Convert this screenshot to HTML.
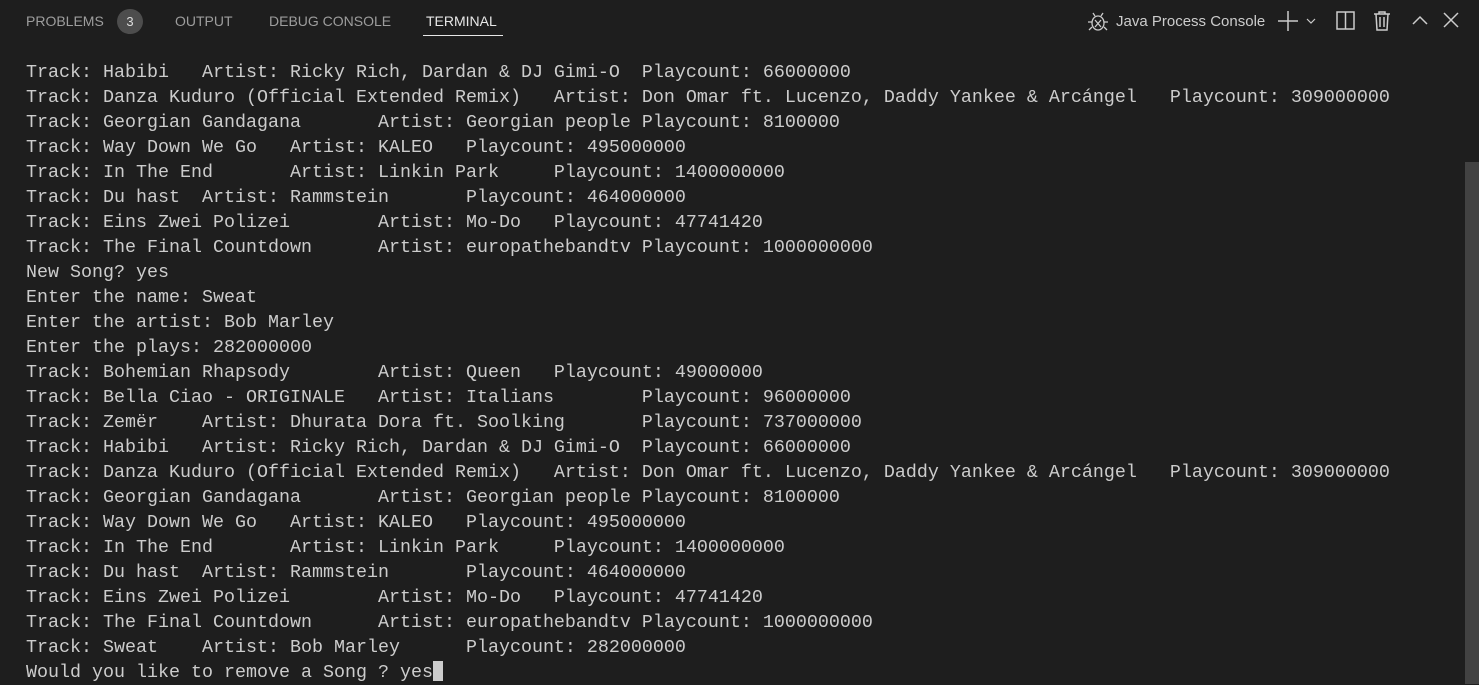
<!DOCTYPE html>
<html><head><meta charset="utf-8"><style>
body{margin:0;width:1479px;height:684px;background:#1e1e1e;overflow:hidden;position:relative;font-family:"Liberation Sans",sans-serif}
.tab{position:absolute;top:13px;font-size:14px;color:#9d9d9d;letter-spacing:0px}
.badge{position:absolute;left:117px;top:9px;width:26px;height:25px;border-radius:13px;background:#4d4d4d;color:#ddd;font-size:13px;text-align:center;line-height:25px}
pre{position:absolute;left:26px;top:60px;margin:0;font-family:"Liberation Mono",monospace;font-size:18.33px;line-height:25px;color:#cccccc}
.cur{display:inline-block;width:10px;height:20px;background:#ccc;vertical-align:-4px}
.sb{position:absolute;left:1465px;top:162px;width:14px;height:522px;background:#424242}
svg{position:absolute}
</style></head><body>
<div class="tab" style="left:26px">PROBLEMS</div>
<div class="badge">3</div>
<div class="tab" style="left:175px">OUTPUT</div>
<div class="tab" style="left:269px">DEBUG CONSOLE</div>
<div class="tab" style="left:426px;color:#e7e7e7">TERMINAL</div>
<div style="position:absolute;left:423px;top:35px;width:80px;height:1px;background:#e7e7e7"></div>
<svg style="left:1086px;top:10px" width="24" height="24" viewBox="0 0 24 24" fill="none" stroke="#ccc" stroke-width="1.3"><ellipse cx="12" cy="13" rx="6" ry="7"/><path d="M9 6l-2-3M15 6l2-3M6 12H2M22 12h-4M6 17l-3 3M18 17l3 3M9 10l6 7M15 10l-6 7"/></svg>
<div style="position:absolute;left:1116px;top:13px;font-size:15px;color:#ccc">Java Process Console</div>
<svg style="left:1277px;top:10px" width="44" height="22" fill="none" stroke="#ccc" stroke-width="1.5"><path d="M11 1v20M1 11h20"/><path d="M30 9l4 4 4-4" stroke-width="1.2"/></svg>
<svg style="left:1335px;top:10px" width="22" height="22" fill="none" stroke="#ccc" stroke-width="1.5"><rect x="2" y="2" width="17" height="17"/><path d="M10.5 2v17"/></svg>
<svg style="left:1372px;top:10px" width="20" height="22" fill="none" stroke="#ccc" stroke-width="1.5"><path d="M2 4h16M7 4V2h6v2M4 4l1 16h10l1-16M8 7v10M12 7v10"/></svg>
<svg style="left:1410px;top:12px" width="20" height="18" fill="none" stroke="#ccc" stroke-width="1.5"><path d="M3 12l7-7 7 7"/></svg>
<svg style="left:1442px;top:11px" width="18" height="18" fill="none" stroke="#ccc" stroke-width="1.5"><path d="M2 2l14 14M16 2L2 16"/></svg>
<div class="sb"></div>
<pre>Track: Habibi   Artist: Ricky Rich, Dardan &amp; DJ Gimi-O  Playcount: 66000000
Track: Danza Kuduro (Official Extended Remix)   Artist: Don Omar ft. Lucenzo, Daddy Yankee &amp; Arcángel   Playcount: 309000000
Track: Georgian Gandagana       Artist: Georgian people Playcount: 8100000
Track: Way Down We Go   Artist: KALEO   Playcount: 495000000
Track: In The End       Artist: Linkin Park     Playcount: 1400000000
Track: Du hast  Artist: Rammstein       Playcount: 464000000
Track: Eins Zwei Polizei        Artist: Mo-Do   Playcount: 47741420
Track: The Final Countdown      Artist: europathebandtv Playcount: 1000000000
New Song? yes
Enter the name: Sweat
Enter the artist: Bob Marley
Enter the plays: 282000000
Track: Bohemian Rhapsody        Artist: Queen   Playcount: 49000000
Track: Bella Ciao - ORIGINALE   Artist: Italians        Playcount: 96000000
Track: Zemër    Artist: Dhurata Dora ft. Soolking       Playcount: 737000000
Track: Habibi   Artist: Ricky Rich, Dardan &amp; DJ Gimi-O  Playcount: 66000000
Track: Danza Kuduro (Official Extended Remix)   Artist: Don Omar ft. Lucenzo, Daddy Yankee &amp; Arcángel   Playcount: 309000000
Track: Georgian Gandagana       Artist: Georgian people Playcount: 8100000
Track: Way Down We Go   Artist: KALEO   Playcount: 495000000
Track: In The End       Artist: Linkin Park     Playcount: 1400000000
Track: Du hast  Artist: Rammstein       Playcount: 464000000
Track: Eins Zwei Polizei        Artist: Mo-Do   Playcount: 47741420
Track: The Final Countdown      Artist: europathebandtv Playcount: 1000000000
Track: Sweat    Artist: Bob Marley      Playcount: 282000000
Would you like to remove a Song ? yes<span class="cur"></span></pre>
</body></html>
